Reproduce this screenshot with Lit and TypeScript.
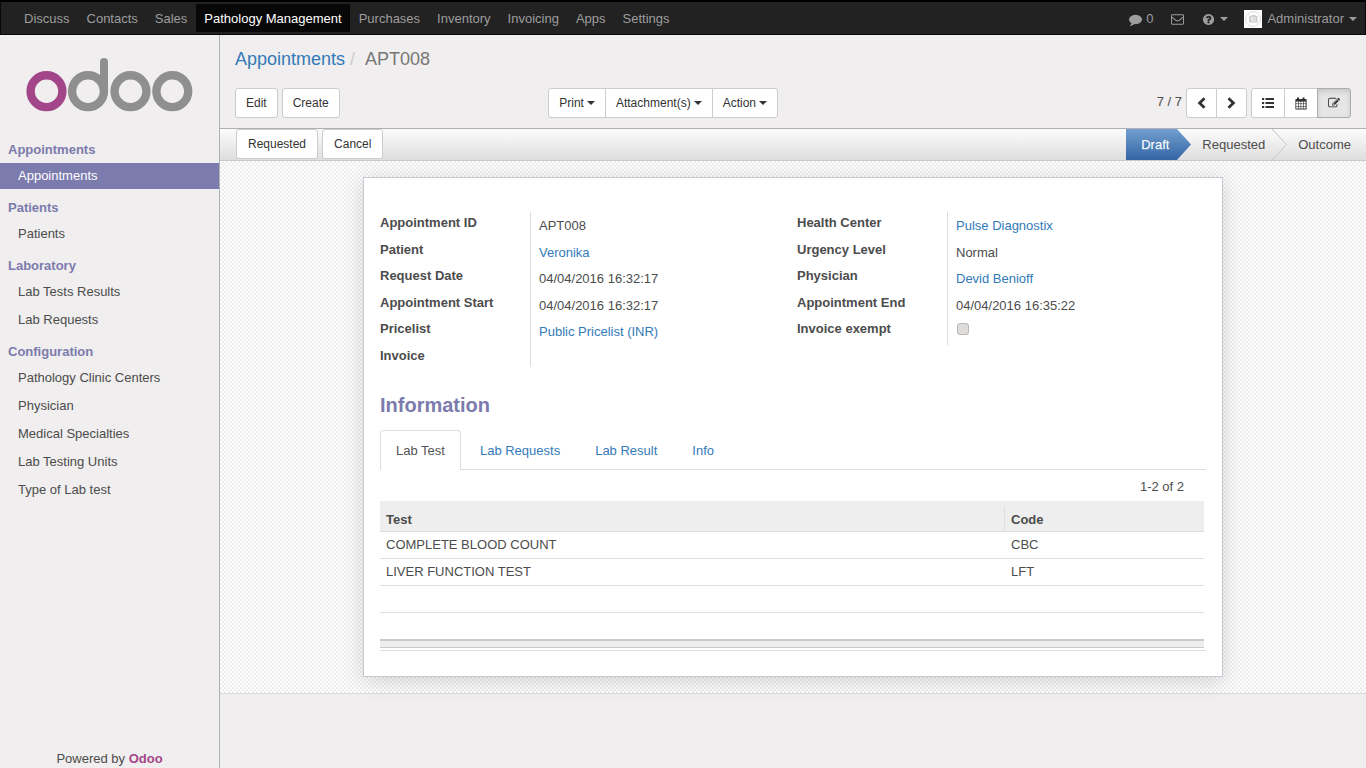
import { LitElement, html, css, svg, nothing } from "lit";
import { customElement } from "lit/decorators.js";
import { classMap } from "lit/directives/class-map.js";

type Field = { label: string; value?: string; link?: boolean; check?: boolean };

const APPS = ["Discuss", "Contacts", "Sales", "Pathology Management", "Purchases", "Inventory", "Invoicing", "Apps", "Settings"];

const MENU = [
  { title: "Appointments", items: ["Appointments"] },
  { title: "Patients", items: ["Patients"] },
  { title: "Laboratory", items: ["Lab Tests Results", "Lab Requests"] },
  { title: "Configuration", items: ["Pathology Clinic Centers", "Physician", "Medical Specialties", "Lab Testing Units", "Type of Lab test"] },
];

const LEFT: Field[] = [
  { label: "Appointment ID", value: "APT008" },
  { label: "Patient", value: "Veronika", link: true },
  { label: "Request Date", value: "04/04/2016 16:32:17" },
  { label: "Appointment Start", value: "04/04/2016 16:32:17" },
  { label: "Pricelist", value: "Public Pricelist (INR)", link: true },
  { label: "Invoice" },
];

const RIGHT: Field[] = [
  { label: "Health Center", value: "Pulse Diagnostix", link: true },
  { label: "Urgency Level", value: "Normal" },
  { label: "Physician", value: "Devid Benioff", link: true },
  { label: "Appointment End", value: "04/04/2016 16:35:22" },
  { label: "Invoice exempt", check: true },
];

const TESTS = [
  ["COMPLETE BLOOD COUNT", "CBC"],
  ["LIVER FUNCTION TEST", "LFT"],
  ["", ""],
  ["", ""],
];

const fa = (d: string) => html`<svg class="fa" viewBox="0 0 1792 1792" aria-hidden="true"><path d=${d}></path></svg>`;

const COMMENT = "M1792 896q0 174-120 321.5t-326 233-450 85.5q-70 0-145-8-198 175-460 242-49 14-114 22-17 2-30.5-9t-17.5-29v-1q-3-4-.5-12t2-10 4.5-9.5l6-9 7-8.5 8-9q7-8 31-34.5t34.5-38 31-39.5 32.5-51 27-59 26-76q-157-89-247.5-220t-90.5-281q0-130 71-248.5t191-204.5 286-136.5 348-50.5q244 0 450 85.5t326 233 120 321.5z";
const QUESTION = "M1024 1376v-192q0-14-9-23t-23-9h-192q-14 0-23 9t-9 23v192q0 14 9 23t23 9h192q14 0 23-9t9-23zm256-672q0-88-55.5-163t-138.5-116-170-41q-243 0-371 213-15 24 8 42l132 100q7 6 19 6 16 0 25-12 53-68 86-92 34-24 86-24 48 0 85.5 26t37.5 59q0 38-20 61t-68 45q-63 28-115.5 86.5t-52.5 125.5v36q0 14 9 23t23 9h192q14 0 23-9t9-23q0-19 21.5-49.5t54.5-49.5q32-18 49-28.5t46-35 44.5-48 28-60.5 12.5-81zm384 192q0 209-103 385.5t-279.5 279.5-385.5 103-385.5-103-279.5-279.5-103-385.5 103-385.5 279.5-279.5 385.5-103 385.5 103 279.5 279.5 103 385.5z";
const PENCIL = "M888 1184l116-116-152-152-116 116v56h96v96h56zm440-720q-16-16-33 1l-350 350q-17 17-1 33t33-1l350-350q17-17 1-33zm80 594v190q0 119-84.5 203.5t-203.5 84.5h-832q-119 0-203.5-84.5t-84.5-203.5v-832q0-119 84.5-203.5t203.5-84.5h832q63 0 117 25 15 7 18 23 3 17-9 29l-49 49q-14 14-32 8-23-6-45-6h-832q-66 0-113 47t-47 113v832q0 66 47 113t113 47h832q66 0 113-47t47-113v-126q0-13 9-22l64-64q15-15 35-7t20 29zm-96-738l288 288-672 672h-288v-288zm444 132l-92 92-288-288 92-92q28-28 68-28t68 28l152 152q28 28 28 68t-28 68z";

const caret = html`<span class="caret"></span>`;

@customElement("app-root")
export class AppRoot extends LitElement {
  static styles = css`
    :host {
      display: flex;
      flex-direction: column;
      min-height: 100vh;
      font: 13px/20px "Liberation Sans", Arial, sans-serif;
      color: #4c4c4c;
      background: #f0eeee;
    }
    *, *::before { box-sizing: border-box; }
    a { color: #337ab7; text-decoration: none; }
    ul, ol, dl, dd, h1, h2, h3 { margin: 0; padding: 0; list-style: none; }
    button { font: inherit; color: inherit; cursor: pointer; }
    .fa { width: 13px; height: 13px; fill: currentColor; display: block; }
    .caret { border: 4px solid transparent; border-top-color: currentColor; border-bottom: 0; }

    .topbar {
      display: flex;
      justify-content: space-between;
      background: #222;
      border: 1px solid #080808;
      border-top: 2px solid #000;
      padding: 2px 0;
      height: 35px;
    }
    .apps { display: flex; gap: 1px; padding-left: 15px; }
    .apps a { display: block; padding: 5px 8px 3px; color: #9d9d9d; height: 28px; }
    .apps a.active { background: #080808; color: #fff; }
    .systray { display: flex; align-items: center; gap: 18px; color: #9d9d9d; padding: 2px 8px 0 0; }
    .systray button { display: flex; align-items: center; gap: 4px; border: 0; background: none; padding: 0; }
    .systray .help, .systray .user { gap: 5px; }
    .systray .user { margin-left: -2px; }
    .avatar { width: 18px; height: 18px; display: block; }

    .body { flex: 1; display: flex; }
    .sidebar {
      width: 220px;
      flex: none;
      border-right: 1px solid #afafb6;
      display: flex;
      flex-direction: column;
    }
    .logo { display: block; padding: 22px 0 0 25px; height: 104px; }
    .menu { display: flex; flex-direction: column; gap: 8px; flex: 1; }
    .menu h3 { font-size: 13px; line-height: 20px; color: #7c7bad; padding: 1px 8px 3px; }
    .menu ul { display: flex; flex-direction: column; gap: 2px; }
    .menu li a { display: block; color: #4c4c4c; padding: 3px 18px; }
    .menu li a.active { background: #7c7bad; color: #fff; }
    .powered { text-align: center; line-height: 18px; }
    .powered a { color: #a24689; font-weight: bold; }

    .main { flex: 1; min-width: 0; display: flex; flex-direction: column; }
    .panel { padding: 12px 15px 10px; border-bottom: 1px solid #afafb6; }
    .crumbs { display: flex; font-size: 18px; line-height: 24px; color: #777; }
    .crumbs li + li::before { content: "/"; color: #ccc; padding: 0 10px 0 5px; }
    .tools { display: grid; grid-template-columns: 1fr 1fr; gap: 30px; margin-top: 17px; }
    .left { display: flex; justify-content: space-between; }
    .right { display: flex; justify-content: flex-end; gap: 4px; }
    .btns { display: flex; gap: 4px; }
    .btn {
      display: flex;
      align-items: center;
      justify-content: center;
      gap: 3px;
      height: 30px;
      padding: 0 10px;
      font-size: 12px;
      line-height: 18px;
      color: #333;
      background: #fff;
      border: 1px solid #ccc;
      border-radius: 3px;
    }
    .group { display: flex; }
    .group .btn { border-radius: 0; }
    .group .btn + .btn { margin-left: -1px; }
    .group .btn:first-child { border-radius: 3px 0 0 3px; }
    .group .btn:last-child { border-radius: 0 3px 3px 0; }
    .btn.pressed { background: #e6e6e6; border-color: #adadad; box-shadow: inset 0 3px 5px rgba(0, 0, 0, 0.125); }
    .count { padding-top: 4px; }
    .glyph { display: block; fill: #333; }

    .status {
      display: flex;
      justify-content: space-between;
      height: 32px;
      padding: 0 15px 0 16px;
      background: linear-gradient(#fcfcfc, #dedede);
      border-bottom: 1px solid #cacaca;
    }
    .status .btn { padding: 0 11px; }
    .steps { display: flex; line-height: 31px; }
    .steps li { display: flex; }
    .steps span { padding: 0 7px 0 11px; }
    .steps li:last-child span { padding-right: 0; }
    .steps .current span {
      padding: 0 8px 0 15px;
      color: #fff;
      background: linear-gradient(#729fcf, #3465a4);
      text-shadow: 0 1px 1px #729fcf;
    }
    .steps svg { display: block; width: 15px; height: 31px; }
    .steps .current svg { width: 14px; }

    .canvas {
      padding: 16px;
      border-bottom: 1px solid #ddd;
      background: repeating-conic-gradient(#ededed 0 25%, #fff 0 50%) 0 0 / 4px 4px;
    }
    .sheet {
      max-width: 860px;
      margin: 0 auto;
      padding: 34px 16px 25px;
      background: #fff;
      border: 1px solid #c8c8d3;
      box-shadow: 0 4px 20px rgba(0, 0, 0, 0.15);
    }
    .groups { display: grid; grid-template-columns: 1fr 1fr; gap: 8px; align-items: start; }
    .fields { display: grid; grid-template-columns: 150px 1fr; grid-template-rows: repeat(5, 1fr); }
    .fields.six { min-height: 155px; grid-template-rows: repeat(5, 1fr) 22px; }
    .fields.five { min-height: 133px; }
    .fields label { font-weight: bold; line-height: 22px; }
    .fields .value { border-left: 1px solid #ddd; padding: 4px 8px 0; }
    .value input {
      appearance: none;
      display: block;
      width: 12px;
      height: 12px;
      margin: 0 1px;
      background: #dfdddb;
      border: 1px solid #b9b6b3;
      border-radius: 3px;
    }
    .fields .tick { padding-top: 5px; }
    h2 { color: #7c7bad; font-size: 20px; line-height: 24px; padding-top: 26px; }
    .tabs { display: flex; gap: 3px; margin-top: 13px; border-bottom: 1px solid #ddd; }
    .tabs button {
      border: 1px solid transparent;
      border-bottom: 0;
      border-radius: 4px 4px 0 0;
      background: none;
      padding: 10px 15px 8px;
      color: #337ab7;
    }
    .tabs button.active { background: #fff; border-color: #ddd; color: #555; margin-bottom: -1px; padding-bottom: 9px; }
    .pane { border-bottom: 1px solid #ddd; padding: 7px 2px 2px 0; }
    .range { text-align: right; padding: 0 20px 4px; }
    table { width: 100%; border-collapse: separate; border-spacing: 0; table-layout: fixed; }
    th, td { text-align: left; padding: 0 6px; height: 27px; border-bottom: 1px solid #ddd; line-height: 20px; }
    th { background: #eee; height: 31px; padding: 5px 0 0; }
    th span { display: block; padding: 4px 6px 1px; }
    th + th span { border-left: 1px solid #dfdfdf; }
    .code { width: 200px; }
    td.code { padding-left: 7px; }
    tbody tr:last-child td { border-bottom: 2px solid #cacaca; height: 28px; }
    tfoot td { height: 7px; padding: 0; background: #eee; border-bottom: 1px solid #cacaca; line-height: 0; }
  `;

  private field(f: Field) {
    const id = f.label.toLowerCase().replace(/ /g, "-");
    if (f.check) {
      return html`<label for=${id}>${f.label}</label>
        <div class="value tick"><input id=${id} type="checkbox" disabled /></div>`;
    }
    return html`<label id="${id}-label">${f.label}</label>
      <div class="value" aria-labelledby="${id}-label">
        ${f.link ? html`<a href="#">${f.value}</a>` : f.value ?? nothing}
      </div>`;
  }

  private topbar() {
    return html`<header class="topbar">
      <nav class="apps">
        ${APPS.map((a) => html`<a href="#" class=${classMap({ active: a === "Pathology Management" })}>${a}</a>`)}
      </nav>
      <div class="systray">
        <button>${fa(COMMENT)}<span>0</span></button>
        <button aria-label="Messages">
          <svg class="fa" viewBox="0 0 14 14">
            <path fill="none" stroke="currentColor" stroke-width="1.1" d="M1.3 2h11.4q.8 0 .8.8v8.4q0 .8-.8.8H1.3q-.8 0-.8-.8V2.8Q.5 2 1.3 2zM.6 4.200C3 6.200 5.500 8.600 7 8.600S11 6.200 13.400 4.200"></path>
          </svg>
        </button>
        <button class="help" aria-label="Help">${fa(QUESTION)}${caret}</button>
        <button class="user">
          <svg class="avatar" viewBox="0 0 18 18">
            <rect width="18" height="18" fill="#fff"></rect>
            <circle cx="9" cy="9" r="7.500" fill="none" stroke="#ddd"></circle>
            <path fill="#ccc" d="M5 6h2l1-1h3l1 1h1.500v6.500H5z"></path>
            <circle cx="9.300" cy="9.200" r="1.900" fill="none" stroke="#fff" stroke-width=".9"></circle>
            <path stroke="#e4e4e4" d="M3.700 3.700l10.600 10.600"></path>
          </svg>
          <span>Administrator</span>${caret}
        </button>
      </div>
    </header>`;
  }

  private sidebar() {
    return html`<aside class="sidebar">
      <a class="logo" href="#" aria-label="Odoo">
        <svg width="170" height="56" viewBox="0 0 170 56" fill="none" stroke="#8f8f8f" stroke-width="8.400">
          <circle cx="21.500" cy="34.200" r="15.900" stroke="#a24689"></circle>
          <circle cx="63" cy="34.200" r="15.900"></circle>
          <path d="M79 34V5" stroke-width="8" stroke-linecap="round"></path>
          <circle cx="105.500" cy="34.200" r="15.900"></circle>
          <circle cx="147.300" cy="34.200" r="15.900"></circle>
        </svg>
      </a>
      <nav class="menu">
        ${MENU.map(
          (s, n) => html`<section>
            <h3>${s.title}</h3>
            <ul>
              ${s.items.map((i) => html`<li><a href="#" class=${classMap({ active: n === 0 })}>${i}</a></li>`)}
            </ul>
          </section>`
        )}
      </nav>
      <footer class="powered">Powered by <a href="#">Odoo</a></footer>
    </aside>`;
  }

  private panel() {
    const days = [0, 1, 2, 3].flatMap((c) => [0, 1, 2].map((r) => svg`<rect x=${1.2 + c * 2.5} y=${4.6 + r * 2.5} width="1.9" height="1.9" fill="#fff"></rect>`));
    return html`<div class="panel">
      <ol class="crumbs">
        <li><a href="#">Appointments</a></li>
        <li>APT008</li>
      </ol>
      <div class="tools">
        <div class="left">
          <div class="btns"><button class="btn">Edit</button><button class="btn">Create</button></div>
          <div class="group">
            ${["Print", "Attachment(s)", "Action"].map((t) => html`<button class="btn">${t}${caret}</button>`)}
          </div>
        </div>
        <div class="right">
          <span class="count">7 / 7</span>
          <div class="group">
            <button class="btn" aria-label="Previous">
              <svg class="glyph" width="9" height="12" viewBox="0 0 9 12"><path fill="none" stroke="#333" stroke-width="2.800" d="M7.500 1.200L2.600 6l4.900 4.800"></path></svg>
            </button>
            <button class="btn" aria-label="Next">
              <svg class="glyph" width="9" height="12" viewBox="0 0 9 12"><path fill="none" stroke="#333" stroke-width="2.800" d="M1.500 1.200L6.400 6l-4.900 4.800"></path></svg>
            </button>
          </div>
          <div class="group">
            <button class="btn" aria-label="List">
              <svg class="glyph" width="12" height="12" viewBox="0 0 12 12"><path d="M0 1h2.200v2H0zM0 5h2.200v2H0zM0 9h2.200v2H0zM3.500 1H12v2H3.500zM3.500 5H12v2H3.500zM3.500 9H12v2H3.500z"></path></svg>
            </button>
            <button class="btn" aria-label="Calendar">
              <svg class="glyph" width="12" height="13" viewBox="0 0 12 13"><path d="M1 2h1V.5h2V2h3.500V.5h2V2H11q.6 0 .6.700v9.300q0 .6-.6.600H1q-.6 0-.6-.6V2.700Q.4 2 1 2z"></path>${days}</svg>
            </button>
            <button class="btn pressed" aria-label="Form"><svg class="glyph" width="12" height="12" viewBox="0 0 1792 1792"><path d=${PENCIL}></path></svg></button>
          </div>
        </div>
      </div>
    </div>`;
  }

  private status() {
    return html`<div class="status">
      <div class="btns"><button class="btn">Requested</button><button class="btn">Cancel</button></div>
      <ul class="steps">
        <li class="current">
          <span>Draft</span>
          <svg viewBox="0 0 14 31" preserveAspectRatio="none">
            <defs><linearGradient id="blue" x2="0" y2="1"><stop stop-color="#729fcf"></stop><stop offset="1" stop-color="#3465a4"></stop></linearGradient></defs>
            <path fill="url(#blue)" d="M0 0L14 15.500L0 31z"></path>
          </svg>
        </li>
        <li>
          <span>Requested</span>
          <svg viewBox="0 0 15 31"><path fill="none" stroke="#c4c4c4" d="M0 0L14.500 15.500L0 31"></path></svg>
        </li>
        <li><span>Outcome</span></li>
      </ul>
    </div>`;
  }

  render() {
    return html`${this.topbar()}
      <div class="body">
        ${this.sidebar()}
        <main class="main">
          ${this.panel()} ${this.status()}
          <div class="canvas">
            <div class="sheet">
              <div class="groups">
                <div class="fields six">${LEFT.map((f) => this.field(f))}</div>
                <div class="fields five">${RIGHT.map((f) => this.field(f))}</div>
              </div>
              <h2>Information</h2>
              <div class="tabs" role="tablist">
                ${["Lab Test", "Lab Requests", "Lab Result", "Info"].map(
                  (t, i) => html`<button role="tab" aria-selected=${i === 0} class=${classMap({ active: i === 0 })}>${t}</button>`
                )}
              </div>
              <div class="pane">
                <div class="range">1-2 of 2</div>
                <table>
                  <thead><tr><th><span>Test</span></th><th class="code"><span>Code</span></th></tr></thead>
                  <tbody>${TESTS.map(([t, c]) => html`<tr><td>${t}</td><td class="code">${c}</td></tr>`)}</tbody>
                  <tfoot><tr><td colspan="2"></td></tr></tfoot>
                </table>
              </div>
            </div>
          </div>
        </main>
      </div>`;
  }
}
